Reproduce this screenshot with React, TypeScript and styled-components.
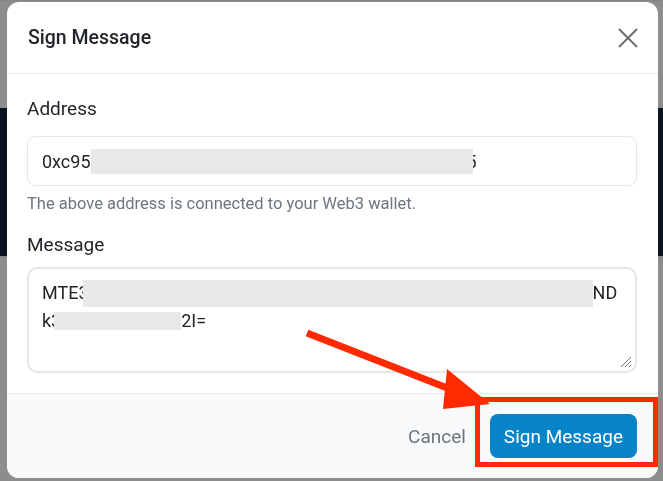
import styled, { createGlobalStyle } from "styled-components";

const GlobalStyle = createGlobalStyle`
  html, body {
    margin: 0;
    padding: 0;
    background: #8d8d8d;
  }
  body {
    font-family: Roboto, "Liberation Sans", sans-serif;
    color: #212529;
  }
  * {
    box-sizing: border-box;
  }
`;

const Backdrop = styled.div`
  width: 663px;
  height: 481px;
  display: grid;
  grid-template-rows: 108px 148px 1fr;
  background: #8d8d8d;
  overflow: hidden;
`;

const Band = styled.div<{ dark?: boolean }>`
  background: ${({ dark }) => (dark ? "#0c1320" : "#8d8d8d")};
  border-top: ${({ dark }) => (dark ? "none" : "1px solid #858585")};
`;

const Overlay = styled.div`
  position: fixed;
  inset: 0;
  padding: 2px 5px 3px 7px;
  display: flex;
`;

const Dialog = styled.div`
  position: relative;
  flex: 1;
  background: #fff;
  border-radius: 12px;
  display: flex;
  flex-direction: column;
  overflow: hidden;
`;

const Header = styled.div`
  flex-shrink: 0;
  height: 72px;
  display: flex;
  align-items: center;
  justify-content: space-between;
  padding: 0 16px 0 21px;
  border-bottom: 1px solid #e9ecef;
`;

const Title = styled.h2`
  margin: 0;
  font-size: 19.5px;
  font-weight: 500;
  color: #212529;
`;

const CloseButton = styled.button`
  border: none;
  background: none;
  padding: 0;
  width: 28px;
  height: 28px;
  display: flex;
  align-items: center;
  justify-content: center;
  cursor: pointer;
`;

const Body = styled.div`
  flex: 1;
  padding: 24px 21px 0 20px;
  display: flex;
  flex-direction: column;
`;

const Label = styled.label<{ space: number }>`
  font-size: 19px;
  color: #212529;
  line-height: 22px;
  margin-bottom: ${({ space }) => space}px;
`;

const Field = styled.div`
  height: 50px;
  border: 1px solid #e4e7eb;
  border-radius: 9px;
  display: flex;
  align-items: center;
  padding: 0 14px;
  font-size: 18px;
  color: #212529;
`;

// grey blocks that hide part of the values, drawn over the neighbouring glyphs
const Redact = styled.span<{ w: number; h: number; before?: number; after?: number }>`
  position: relative;
  z-index: 1;
  display: inline-block;
  flex-shrink: 0;
  width: ${({ w }) => w}px;
  height: ${({ h }) => h}px;
  margin-left: ${({ before }) => -(before ?? 0)}px;
  margin-right: ${({ after }) => -(after ?? 0)}px;
  background: #e8e8e8;
`;

const Help = styled.div`
  font-size: 16.5px;
  line-height: 19px;
  color: #6c757d;
  margin: 8px 0 21px;
`;

const TextArea = styled.div`
  position: relative;
  height: 106px;
  border: 2px solid #e6e6e6;
  border-radius: 10px;
  padding: 10px 13px;
  font-size: 18px;
  line-height: 28px;
  color: #212529;
`;

const Line = styled.div`
  display: flex;
  align-items: center;
  height: 28px;
`;

const Grip = styled.svg`
  position: absolute;
  right: 3px;
  bottom: 3px;
`;

const Footer = styled.div`
  flex-shrink: 0;
  height: 85px;
  background: #f8f9fa;
  border-top: 1px solid #e9ecef;
  display: flex;
  align-items: center;
  justify-content: flex-end;
  gap: 10px;
  padding: 0 21px 0 0;
`;

const Button = styled.button<{ primary?: boolean }>`
  font-family: inherit;
  font-size: 19px;
  border: none;
  cursor: pointer;
  border-radius: 8px;
  height: 44px;
  padding: 0 14px;
  color: ${({ primary }) => (primary ? "#fff" : "#6c757d")};
  background: ${({ primary }) => (primary ? "#0784c7" : "transparent")};
`;

const Annotation = styled.svg`
  position: fixed;
  left: 0;
  top: 0;
  pointer-events: none;
`;

export default function App() {
  return (
    <>
      <GlobalStyle />
      <Backdrop>
        <Band />
        <Band dark />
        <Band />
      </Backdrop>
      <Overlay>
        <Dialog>
          <Header>
            <Title>Sign Message</Title>
            <CloseButton aria-label="Close">
              <svg width="22" height="22" viewBox="0 0 22 22">
                <path
                  d="M2 2L20 20M20 2L2 20"
                  stroke="#6f6f6f"
                  strokeWidth="2"
                  fill="none"
                />
              </svg>
            </CloseButton>
          </Header>
          <Body>
            <Label space={16}>Address</Label>
            <Field>
              0xc95
              <Redact w={382} h={25} after={6} />
              5
            </Field>
            <Help>The above address is connected to your Web3 wallet.</Help>
            <Label space={11}>Message</Label>
            <TextArea>
              <Line>
                MTE3
                <Redact w={510} h={27} before={6} />
                ND
              </Line>
              <Line>
                k3
                <Redact w={127} h={18} before={7} />
                2I=
              </Line>
              <Grip width="12" height="12" viewBox="0 0 12 12">
                <path
                  d="M11 1L1 11M11 5L5 11M11 9L9 11"
                  stroke="#777"
                  strokeWidth="1"
                />
              </Grip>
            </TextArea>
          </Body>
          <Footer>
            <Button>Cancel</Button>
            <Button primary>Sign Message</Button>
          </Footer>
        </Dialog>
      </Overlay>
      <Annotation width="663" height="481" viewBox="0 0 663 481">
        <line
          x1="307"
          y1="333"
          x2="460"
          y2="393"
          stroke="#ff2a00"
          strokeWidth="7"
        />
        <polygon points="447,369 490,404 443,409" fill="#ff2a00" />
        <rect
          x="477.5"
          y="399.5"
          width="178"
          height="65"
          fill="none"
          stroke="#ff2a00"
          strokeWidth="5"
        />
      </Annotation>
    </>
  );
}
